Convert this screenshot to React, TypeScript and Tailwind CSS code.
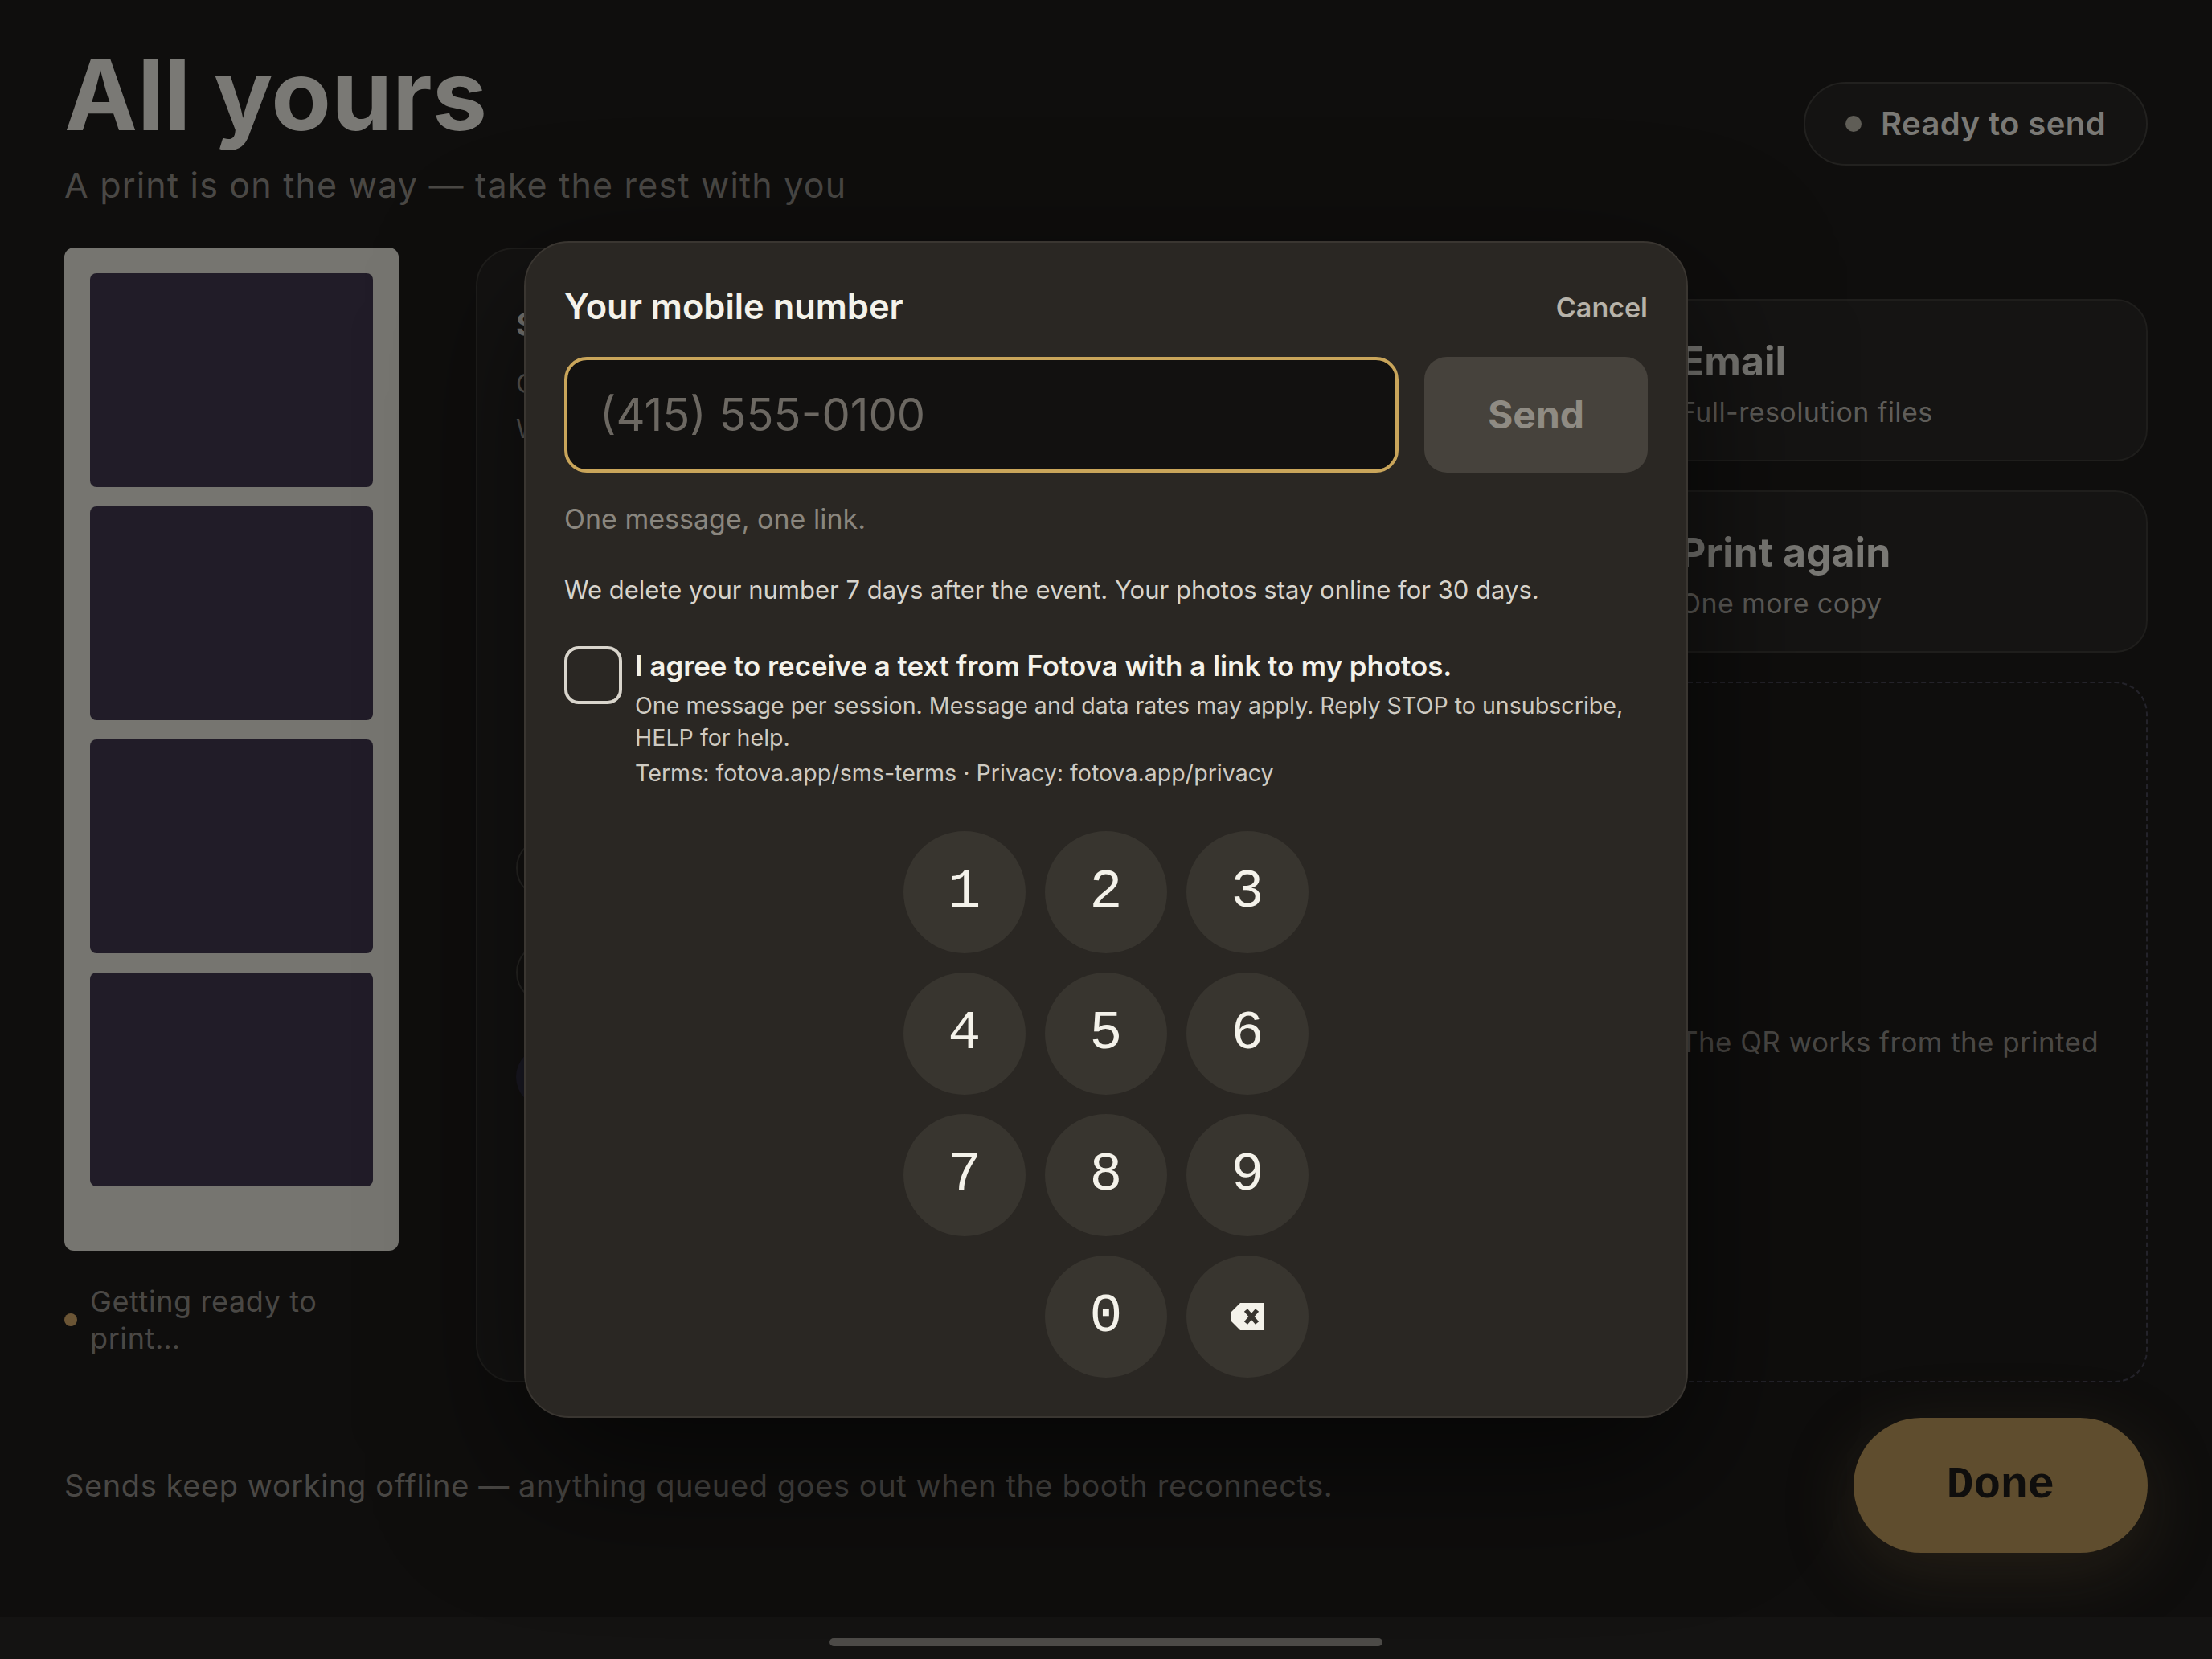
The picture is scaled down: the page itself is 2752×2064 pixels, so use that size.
import { useState } from "react";

// Booth "All yours" screen with the SMS modal open
const KEYS = ["1", "2", "3", "4", "5", "6", "7", "8", "9", "", "0", "del"];

const SIDE_OPTIONS = [
  { title: "Email", sub: "Full-resolution files" },
  { title: "Print again", sub: "One more copy" },
];

const Backspace = () => (
  <svg width="22" height="20" viewBox="0 0 22 20">
    <path d="M6.5 1.5H21V18.5H6.5L1 13V7Z" fill="#f4f2ea" />
    <path d="M10 6L17 14M17 6L10 14" stroke="#38352f" strokeWidth="2.8" />
  </svg>
);

const App = () => {
  const [phone, setPhone] = useState("");
  const [agree, setAgree] = useState(false);

  const press = (k: string) => {
    if (k === "del") setPhone(p => p.slice(0, -1));
    else if (k) setPhone(p => (p.length < 10 ? p + k : p));
  };

  return (
    <div className="relative w-[1376px] h-[1032px] overflow-hidden bg-[#0f0e0d] [zoom:2] [font-family:Inter,sans-serif]">
      <div className="flex flex-col h-full px-10 pt-[29px]">
        {/* Header */}
        <div className="flex justify-between items-start">
          <div>
            <h1 className="text-[61px] leading-[60px] font-bold text-[#7a7975]">All yours</h1>
            <p className="mt-3 text-[21.5px] leading-[28px] tracking-[0.6px] text-[#4a4845]">
              A print is on the way — take the rest with you
            </p>
          </div>
          <div className="mt-[22px] h-[52px] px-[25px] rounded-full border border-[#22211f] bg-[#141312] flex items-center gap-3">
            <span className="w-2.5 h-2.5 rounded-full bg-[#5f5d56]" />
            <span className="text-[20px] font-semibold tracking-[0.2px] text-[#7a7975]">Ready to send</span>
          </div>
        </div>

        {/* Main grid */}
        <div className="mt-[25px] h-[706px] grid grid-cols-[208px_1fr_316px] gap-12">
          {/* Print strip */}
          <div>
            <div className="h-[624px] rounded-md bg-[#767570] pt-4 px-4 pb-10 flex flex-col gap-3">
              {[0, 1, 2, 3].map(i => (
                <div key={i} className="flex-1 rounded bg-[#211c28]" />
              ))}
            </div>
            <div className="mt-5 flex items-center gap-2">
              <span className="w-2 h-2 shrink-0 rounded-full bg-[#6b5535]" />
              <span className="text-[18px] leading-[23px] tracking-[0.3px] text-[#4a4845]">Getting ready to print…</span>
            </div>
          </div>

          {/* Phone card (behind modal) */}
          <div className="rounded-3xl border border-[#1f1e1c] bg-[#141312] px-6 pt-8">
            <div className="text-[20px] font-bold text-[#7a7975]">Send to your phone</div>
            <p className="mt-2 text-[16px] leading-[28px] text-[#5f5d59]">
              Get a link to every shot from this session.
              <br />
              Works with any phone, no app needed.
            </p>
            <div className="mt-[240px] flex flex-col gap-[27px] w-[300px]">
              <div className="h-[38px] rounded-full border border-[#2a2926]" />
              <div className="h-[38px] rounded-full border border-[#2a2926]" />
              <div className="h-[38px] rounded-full bg-[#1c1b26]" />
            </div>
          </div>

          {/* Other options */}
          <div className="pt-8 flex flex-col gap-[18px]">
            {SIDE_OPTIONS.map(o => (
              <div key={o.title} className="h-[101px] rounded-[20px] border border-[#1f1e1c] bg-[#151413] px-6 pt-[4px] flex flex-col justify-center">
                <div className="text-[25px] leading-[32px] font-bold text-[#7a7975]">{o.title}</div>
                <div className="mt-[4px] text-[17px] leading-[24px] tracking-[0.2px] text-[#5f5d59]">{o.sub}</div>
              </div>
            ))}
            <div className="flex-1 rounded-[20px] border border-dashed border-[#24232a] px-6 pt-3 flex items-center">
              <p className="whitespace-nowrap text-[17.5px] tracking-[0.2px] text-[#4a4845]">The QR works from the printed</p>
            </div>
          </div>
        </div>

        {/* Footer */}
        <div className="mt-[22px] h-[84px] flex items-center justify-between">
          <p className="text-[19px] tracking-[0.3px] text-[#4a4845]">
            Sends keep working offline — anything queued goes out when the booth reconnects.
          </p>
          <button className="w-[183px] h-[84px] rounded-full bg-[#5f4d2e] shadow-[0_12px_44px_rgba(95,77,46,0.28)] [font-family:'Liberation_Mono',monospace] text-[28px] font-bold text-[#0f0e0d]">
            Done
          </button>
        </div>

        {/* Home indicator band */}
        <div className="mt-auto -mx-10 h-[26px] bg-[#141312] flex justify-center pt-[13px]">
          <div className="w-[344px] h-[5px] rounded-full bg-[#4c4a47]" />
        </div>
      </div>

      {/* SMS modal */}
      <div className="absolute inset-0 flex items-center justify-center">
        <div className="w-[724px] rounded-[28px] border border-[#3a3631] bg-[#2a2723] px-6 pt-[25px] pb-6 shadow-[0_30px_90px_rgba(0,0,0,0.6)]">
          <div className="flex justify-between items-center h-[30px]">
            <h2 className="text-[21.7px] font-semibold text-[#f4f2ea]">Your mobile number</h2>
            <button className="text-[17px] font-semibold text-[#b7b3aa]">Cancel</button>
          </div>

          <div className="mt-4 flex gap-4">
            <div className="flex-1 h-[72px] rounded-[14px] border-2 border-[#c9a55a] bg-[#121110] px-5 flex items-center">
              <span className={`text-[28px] ${phone ? "text-[#f4f2ea]" : "text-[#6c6862]"}`}>
                {phone || "(415) 555-0100"}
              </span>
            </div>
            <button className="w-[139px] h-[72px] rounded-[14px] bg-[#46423c] text-[24px] font-bold text-[#8f8b83]">
              Send
            </button>
          </div>

          <p className="mt-[17px] text-[17px] leading-[24px] text-[#8a867e]">One message, one link.</p>
          <p className="mt-5 text-[15.5px] leading-[24px] text-[#d8d4cc]">
            We delete your number 7 days after the event. Your photos stay online for 30 days.
          </p>

          <div className="mt-[23px] flex items-start gap-2">
            <button
              onClick={() => setAgree(!agree)}
              className={`w-9 h-9 shrink-0 rounded-[9px] border-2 border-[#d9d5cc] ${agree ? "bg-[#c9a55a]" : ""}`}
            />
            <div>
              <div className="text-[17.4px] leading-[24px] font-semibold text-[#f4f2ea]">
                I agree to receive a text from Fotova with a link to my photos.
              </div>
              <p className="mt-[3px] text-[14.3px] leading-[20px] text-[#cfcbc2]">
                One message per session. Message and data rates may apply. Reply STOP to unsubscribe, HELP for help.
              </p>
              <p className="mt-[2px] text-[14.3px] leading-[20px] text-[#cfcbc2]">
                Terms: fotova.app/sms-terms · Privacy: fotova.app/privacy
              </p>
            </div>
          </div>

          {/* Keypad */}
          <div className="mt-[26px] mx-auto w-[252px] grid grid-cols-3 gap-3">
            {KEYS.map((k, i) =>
              k === "" ? (
                <div key={i} />
              ) : (
                <button
                  key={i}
                  onClick={() => press(k)}
                  className="w-[76px] h-[76px] rounded-full bg-[#38352f] flex items-center justify-center [font-family:'Liberation_Mono',monospace] text-[34px] text-[#f4f2ea]"
                >
                  {k === "del" ? <Backspace /> : k}
                </button>
              )
            )}
          </div>
        </div>
      </div>
    </div>
  );
};

export default App;
